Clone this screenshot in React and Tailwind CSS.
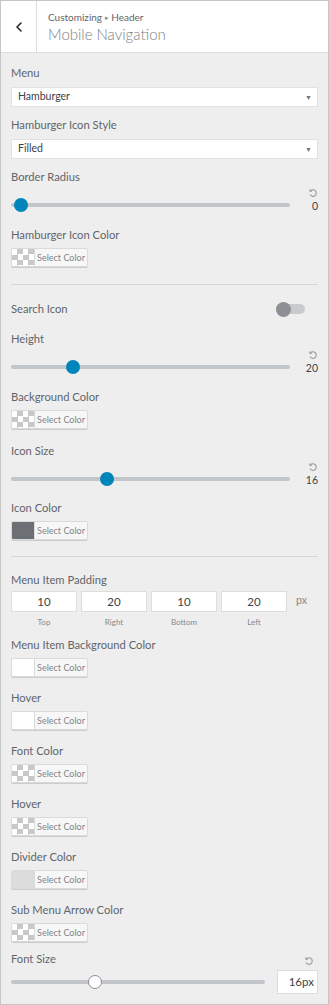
import { ChevronLeft } from 'lucide-react';

const font = { fontFamily: 'Lato, "Open Sans", sans-serif' };

function Label({ children, className = '' }) {
  return <div className={`text-[11.2px] leading-[16px] text-[#5f656b] ${className}`}>{children}</div>;
}

function Select({ value }) {
  return (
    <div className="mt-[6px] h-[20px] bg-white border border-[#e2e2e2] flex items-center justify-between pl-[6px] pr-[5px]">
      <span className="text-[10.5px] text-[#3c4146]">{value}</span>
      <span className="text-[7px] text-[#777]">▼</span>
    </div>
  );
}

function ResetIcon() {
  return (
    <svg width="10" height="10" viewBox="0 0 10 10" fill="none" stroke="#999" strokeWidth="1.1">
      <path d="M2.2 3.2 A3.3 3.3 0 1 1 2 6.6" />
      <path d="M1.6 1.4 L2.2 3.4 L4.2 3" />
    </svg>
  );
}

function Slider({ value, pos }) {
  return (
    <div className="mt-[3px] flex items-end">
      <div className="relative flex-1 h-[14px] flex items-center mr-[8px]">
        <div className="w-full h-[4px] rounded-full bg-[#c2c5c9]" />
        <div
          className="absolute top-0 w-[14px] h-[14px] rounded-full bg-[#0085ba]"
          style={{ left: `${pos}px` }}
        />
      </div>
      <div className="w-[20px] flex flex-col items-end">
        <ResetIcon />
        <span className="text-[10.5px] leading-[12px] mt-[2px] text-[#3c4146]">{value}</span>
      </div>
    </div>
  );
}

function ColorButton({ swatch }) {
  let sw = 'bg-[repeating-conic-gradient(#c8c8c8_0_25%,#ffffff_0_50%)] bg-[length:11px_11px]';
  if (swatch === 'white') sw = 'bg-white';
  if (swatch === 'dark') sw = 'bg-[#6c7075]';
  if (swatch === 'light') sw = 'bg-[#dcdcdc]';
  return (
    <div className="mt-[5px] w-[77px] h-[19px] flex border border-[#dadada] rounded-[2px] shadow-[0_1px_0_#cccccc] overflow-hidden">
      <div className={`w-[22px] h-full ${sw}`} />
      <div className="flex-1 bg-[#f7f7f7] border-l border-[#dadada] flex items-center justify-center text-[9px] text-[#80858a]">
        Select Color
      </div>
    </div>
  );
}

export default function App() {
  return (
    <div style={font} className="w-[329px] h-[1005px] bg-[#eeeeee] border border-[#c6c6c6] border-t-0 flex flex-col">
      <div className="h-[53px] bg-white border-b border-[#dddddd] border-t border-t-[#c6c6c6] flex">
        <div className="w-[36px] border-r border-[#dddddd] flex items-center justify-center">
          <ChevronLeft size={16} strokeWidth={2.4} color="#23282d" />
        </div>
        <div className="pl-[11px] pt-[9px]">
          <div className="text-[10px] leading-[14px] text-[#5f656b]">
            Customizing <span className="text-[7px] text-[#888] align-[1px]">▸</span> Header
          </div>
          <div className="text-[15px] leading-[20px] text-[#7a7f84] font-light">Mobile Navigation</div>
        </div>
      </div>

      <div className="px-[10px] pt-[12px]">
        <Label>Menu</Label>
        <Select value="Hamburger" />
        <Label className="mt-[10px]">Hamburger Icon Style</Label>
        <Select value="Filled" />
        <Label className="mt-[10px]">Border Radius</Label>
        <Slider value="0" pos={3} />

        <Label className="mt-[15px]">Hamburger Icon Color</Label>
        <ColorButton />

        <div className="mt-[17px] border-t border-[#d5d5d5]" />

        <div className="mt-[16px] flex items-center justify-between">
          <Label>Search Icon</Label>
          <div className="relative w-[29px] h-[15px] mr-[13px] flex items-center">
            <div className="w-full h-[10px] rounded-full bg-[#c8cacc]" />
            <div className="absolute left-0 top-0 w-[15px] h-[15px] rounded-full bg-[#8c8f94]" />
          </div>
        </div>

        <Label className="mt-[14px]">Height</Label>
        <Slider value="20" pos={55} />

        <Label className="mt-[15px]">Background Color</Label>
        <ColorButton />
        <Label className="mt-[14px]">Icon Size</Label>
        <Slider value="16" pos={89} />
        <Label className="mt-[14px]">Icon Color</Label>
        <ColorButton swatch="dark" />

        <div className="mt-[16px] border-t border-[#d5d5d5]" />

        <Label className="mt-[15px]">Menu Item Padding</Label>
        <div className="mt-[3px] flex items-center gap-[4px]">
          {[['10', 'Top'], ['20', 'Right'], ['10', 'Bottom'], ['20', 'Left']].map(([v, l]) => (
            <div key={l} className="w-[66px] flex flex-col items-center">
              <div className="w-full h-[21px] bg-white border border-[#dddddd] flex items-center justify-center text-[11.5px] text-[#3c4146]">
                {v}
              </div>
              <span className="mt-[4px] text-[8px] text-[#888]">{l}</span>
            </div>
          ))}
          <span className="ml-[5px] mb-[18px] text-[10.5px] text-[#888]">px</span>
        </div>

        <Label className="mt-[9px]">Menu Item Background Color</Label>
        <ColorButton swatch="white" />
        <Label className="mt-[13px]">Hover</Label>
        <ColorButton swatch="white" />
        <Label className="mt-[13px]">Font Color</Label>
        <ColorButton />
        <Label className="mt-[13px]">Hover</Label>
        <ColorButton />
        <Label className="mt-[13px]">Divider Color</Label>
        <ColorButton swatch="light" />
        <Label className="mt-[13px]">Sub Menu Arrow Color</Label>
        <ColorButton />

        <div className="mt-[9px] flex items-center justify-between">
          <Label>Font Size</Label>
          <div className="mr-[4px] mt-[4px]"><ResetIcon /></div>
        </div>
        <div className="mt-[3px] flex items-center">
          <div className="relative flex-1 h-[14px] flex items-center mr-[12px]">
            <div className="w-full h-[4px] rounded-full bg-[#c2c5c9]" />
            <div className="absolute top-0 left-[77px] w-[14px] h-[14px] rounded-full bg-white border border-[#8c8f94]" />
          </div>
          <div className="w-[41px] h-[24px] bg-white border border-[#dddddd] flex items-center justify-end pr-[3px] text-[11.5px] text-[#3c4146]">
            16px
          </div>
        </div>
      </div>
    </div>
  );
}
